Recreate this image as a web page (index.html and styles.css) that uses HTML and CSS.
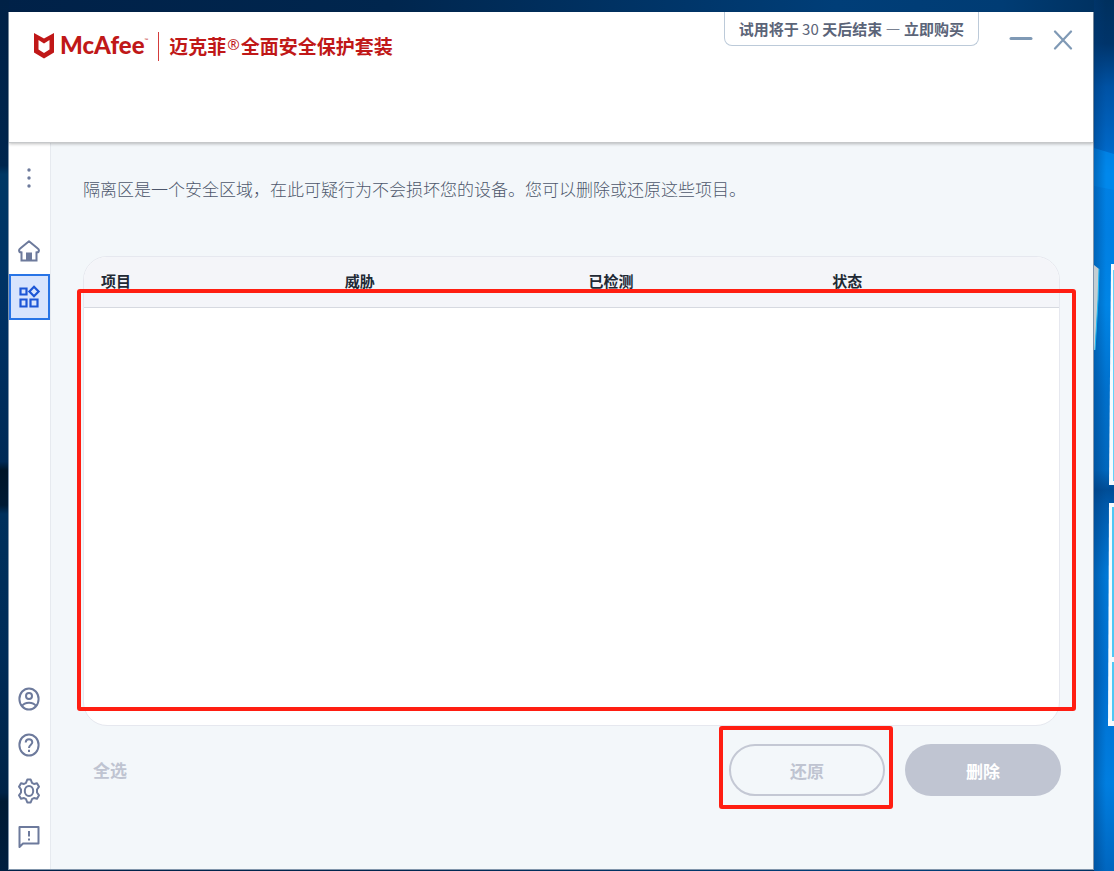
FILE: index.html
```html
<!DOCTYPE html>
<html lang="zh-CN">
<head>
<meta charset="utf-8">
<meta name="viewport" content="width=device-width, initial-scale=1">
<title>迈克菲® 全面安全保护套装</title>
<link rel="stylesheet" href="styles.css">
</head>
<body>
<div class="wallpaper" aria-hidden="true">
  <div class="wall-left"></div>
  <div class="wall-right">
    <svg width="20" height="871" viewBox="0 0 20 871" preserveAspectRatio="none">
      <defs>
        <linearGradient id="sky" x1="0" y1="0" x2="0" y2="1">
          <stop offset="0" stop-color="#00305e"/><stop offset=".05" stop-color="#00346a"/>
          <stop offset=".1" stop-color="#0052a4"/><stop offset=".17" stop-color="#0067c6"/>
          <stop offset=".2" stop-color="#0080e4"/><stop offset=".27" stop-color="#007fe2"/>
          <stop offset=".35" stop-color="#0085e6"/><stop offset=".45" stop-color="#0070cc"/>
          <stop offset=".54" stop-color="#0067bd"/><stop offset=".562" stop-color="#004d96"/>
          <stop offset=".58" stop-color="#0059aa"/><stop offset=".66" stop-color="#0078d6"/>
          <stop offset=".78" stop-color="#0070d0"/><stop offset=".9" stop-color="#007ee0"/>
          <stop offset="1" stop-color="#0066bf"/>
        </linearGradient>
        <linearGradient id="shade" x1="0" y1="0" x2="1" y2="0">
          <stop offset="0" stop-color="#003a78" stop-opacity=".4"/><stop offset="1" stop-color="#003a78" stop-opacity="0"/>
        </linearGradient>
      </defs>
      <rect width="20" height="871" fill="url(#sky)"/>
      <path d="M0 148L20 154V190L0 186Z" fill="#008cf0" opacity=".7"/>
      <rect width="12" height="871" fill="url(#shade)"/>
      <path d="M0 265L5 269L4 300L1 350L0 350Z" fill="#c3ced3"/>
      <path d="M5 269L4 300L1 350" fill="none" stroke="#20b8f0"/>
      <path d="M17 264H20V485H15Z" fill="#f4fbff"/>
      <path d="M19 270H20V481H19Z" fill="#62d2fa"/>
      <path d="M15 503H20V726H14Z" fill="#f4fbff"/>
      <path d="M18 507H20V657H18ZM18 662H20V721H18Z" fill="#4fc8f4"/>
    </svg>
  </div>
</div>

<div class="window">
  <header class="titlebar">
    <div class="brand">
      <svg class="shield" width="20" height="26" viewBox="0 0 20 26" aria-hidden="true">
        <path d="M0 0L10 5.500L20 0V19.500L10 25.500L0 19.500ZM4.500 7V16.500L10 20L15.500 16.500V7L10 10.500Z" fill="#c01818" fill-rule="evenodd"/>
      </svg>
      <span class="wordmark">McAfee<sup class="tm">™</sup></span>
      <h1 class="product">迈克菲<span class="reg">®</span>全面安全保护套装</h1>
    </div>
    <div class="window-tools">
      <a class="trial" href="#">试用将于 <span class="thin">30</span> 天后结束 <span class="dash">—</span> 立即购买</a>
      <button class="tool minimize" type="button" aria-label="最小化">
        <svg width="24" height="24" viewBox="0 0 24 24"><path d="M2 11.500H22" stroke="#7f99b5" stroke-width="3" stroke-linecap="round"/></svg>
      </button>
      <button class="tool close" type="button" aria-label="关闭">
        <svg width="20" height="20" viewBox="0 0 20 20"><path d="M2 1.500L18 18.500M18 1.500L2 18.500" stroke="#7f99b5" stroke-width="2.200" stroke-linecap="round"/></svg>
      </button>
    </div>
  </header>

  <div class="body">
    <nav class="sidebar" aria-label="导航">
      <button class="nav-item menu" type="button" aria-label="菜单">
        <svg width="24" height="24" viewBox="0 0 24 24" fill="#6d7a9c"><circle cx="12" cy="4" r="1.700"/><circle cx="12" cy="12" r="1.700"/><circle cx="12" cy="20" r="1.700"/></svg>
      </button>
      <button class="nav-item" type="button" aria-label="主页">
        <svg width="24" height="24" viewBox="0 0 24 24" fill="none" stroke="#6d7a9c" stroke-width="2"><path d="M4.500 12.500V21.500H19.500V12.500"/><path d="M4.500 13.200H2.700Q1.300 11 3.200 9.500L12 2.200L20.800 9.500Q22.700 11 21.300 13.200H19.500" stroke-linejoin="round"/><path d="M10 22V14.500H14V22M12 14.500V22"/></svg>
      </button>
      <button class="nav-item active" type="button" aria-label="我的保护" aria-current="page">
        <svg width="24" height="24" viewBox="0 0 24 24" fill="none" stroke="#1d56d6" stroke-width="2.200"><path d="M3.500 3.500H9.500V9.500H3.500ZM3.500 14.500H9.500V21.500H3.500ZM13.500 14.500H20.500V21.500H13.500ZM17 1.800L21.600 6.500L17 11.200L12.400 6.500Z"/></svg>
      </button>
      <button class="nav-item lower" type="button" aria-label="帐户">
        <svg width="24" height="24" viewBox="0 0 24 24" fill="none" stroke="#6d7a9c" stroke-width="2"><ellipse cx="12" cy="12" rx="9.600" ry="10.600"/><circle cx="12" cy="9" r="3"/><path d="M5 19Q7 15.700 12 15.700T19 19"/></svg>
      </button>
      <button class="nav-item" type="button" aria-label="帮助">
        <svg width="24" height="24" viewBox="0 0 24 24" fill="none" stroke="#6d7a9c" stroke-width="2"><ellipse cx="12" cy="12" rx="9.600" ry="10.600"/><path d="M8.700 9.500Q8.900 6.300 12 6.300T15.300 9.300C15.300 11.600 12 11.800 12 15M12 16.800V19"/></svg>
      </button>
      <button class="nav-item" type="button" aria-label="设置">
        <svg width="24" height="26" viewBox="0 0 24 26" fill="none" stroke="#6d7a9c" stroke-width="2" stroke-linejoin="round"><path d="M10.300 1.500H13.700L15 4.800L17 6L20 5.300L22 8.700L20 11.500V14.500L22 17.300L20 20.700L17 20L15 21.200L13.700 24.500H10.300L9 21.200L7 20L4 20.700L2 17.300L4 14.500V11.500L2 8.700L4 5.300L7 6L9 4.800Z"/><ellipse cx="12" cy="13" rx="4.200" ry="5"/></svg>
      </button>
      <button class="nav-item" type="button" aria-label="反馈">
        <svg width="24" height="24" viewBox="0 0 24 24" fill="none" stroke="#6d7a9c" stroke-width="2"><path d="M2.500 22V2H21.500V18.500H6Z" stroke-linejoin="round"/><path d="M12 6V11.500M12 13.500V15.500"/></svg>
      </button>
    </nav>

    <main class="content">
      <p class="intro">隔离区是一个安全区域，在此可疑行为不会损坏您的设备。您可以删除或还原这些项目。</p>
      <section class="list-area">
        <div class="card">
          <table class="items">
            <thead><tr><th scope="col">项目</th><th scope="col">威胁</th><th scope="col">已检测</th><th scope="col">状态</th></tr></thead>
            <tbody></tbody>
          </table>
        </div>
        <div class="mark mark-list"></div>
      </section>
      <div class="actions">
        <button class="select-all" type="button" disabled>全选</button>
        <div class="restore-area">
          <button class="pill outline" type="button" disabled>还原</button>
          <div class="mark mark-restore"></div>
        </div>
        <button class="pill filled" type="button" disabled>删除</button>
      </div>
    </main>
  </div>
</div>
</body>
</html>
```

FILE: styles.css
```css
* { box-sizing: border-box; }

body {
  margin: 0;
  min-height: 100vh;
  display: flex;
  padding: 12px 20px 1px 8px;
  position: relative;
  background: linear-gradient(90deg, #002148 0%, #00264e 35%, #003e78 75%, #003c74 90%, #00305e 100%);
  font-family: "Noto Sans CJK SC", sans-serif;
  color: #5b6478;
}

button { font: inherit; margin: 0; padding: 0; border: 0; background: none; color: inherit; }
svg { display: block; }

.wall-left, .wall-right { position: absolute; top: 0; bottom: 0; }
.wall-left {
  left: 0;
  width: 9px;
  background: linear-gradient(#002146 0%, #00264e 19%, #003764 20%, #003264 35%, #002a56 53%, #001528 54%, #001a34 58%, #00305c 59%, #002c58 75%, #002347 91%, #001a33 92%, #001f40 100%);
}
.wall-right { right: 0; width: 20px; }
.wall-right svg { height: 100%; }

.window {
  position: relative;
  flex: 1;
  display: flex;
  flex-direction: column;
  background: #f3f7fa;
  border: solid #8195ab;
  border-width: 0 1px 1px;
}

.titlebar {
  position: relative;
  display: flex;
  justify-content: space-between;
  align-items: flex-start;
  height: 131px;
  padding: 0 18px 0 25px;
  background: #fff;
  border-bottom: 1px solid #c6c8ca;
  box-shadow: 0 1px 3px rgba(0, 0, 0, .25);
}

.brand { display: flex; align-items: center; padding-top: 19px; color: #c01818; }
.wordmark {
  display: flex;
  margin-left: 6px;
  padding-bottom: 2px;
  font: 900 24px/28px Lato, sans-serif;
}
.tm { font: 400 5px/18px Lato, sans-serif; }
.product {
  display: flex;
  align-items: center;
  margin: 0 0 0 10px;
  padding-left: 10px;
  height: 29px;
  border-left: 1px solid #d43c3c;
  font-size: 19px;
  line-height: 28px;
  font-weight: 700;
}
.reg { font: 400 15px/28px "Open Sans", sans-serif; padding: 0 1px 4px; }

.window-tools { display: flex; align-items: flex-start; }
.trial {
  height: 34px;
  padding: 0 14px;
  border: 1px solid #bccad9;
  border-top: 0;
  border-radius: 0 0 8px 8px;
  font-size: 15px;
  line-height: 34px;
  font-weight: 700;
  color: #5b6478;
  text-decoration: none;
  white-space: nowrap;
}
.thin { font-weight: 400; }
.dash { font-weight: 500; }
.minimize { margin: 15px 0 0 30px; }
.close { margin: 18px 2px 0 20px; }

.body { flex: 1; display: flex; }

.sidebar {
  width: 42px;
  display: flex;
  flex-direction: column;
  padding: 12px 0 9px;
  background: #fff;
  border-right: 1px solid #e6eaef;
}
.nav-item { height: 46px; display: grid; place-items: center; padding-right: 1px; }
.menu { margin-bottom: 27px; }
.lower { margin-top: auto; }
.active { background: #d8e4fd; border: 2px solid #2874e6; }

.content {
  flex: 1;
  display: flex;
  flex-direction: column;
  padding: 34px 33px 73px 32px;
}
.intro { margin: 0 0 55px; font-size: 17px; line-height: 24px; font-weight: 300; color: #4e576c; }

.list-area { flex: 1; display: flex; position: relative; }
.card {
  flex: 1;
  overflow: hidden;
  background: #fff;
  border: 1px solid #e6e8ef;
  border-radius: 24px;
}
.items { width: 100%; table-layout: fixed; border-collapse: collapse; background: #f4f5f9; }
.items th {
  height: 50px;
  padding: 0 0 1px 17px;
  border-bottom: 1px solid #d6d9e0;
  text-align: left;
  font-size: 15px;
  line-height: 22px;
  font-weight: 700;
  color: #212934;
}

.mark { position: absolute; border: 4px solid #ff1e12; border-radius: 3px; pointer-events: none; }
.mark-list { inset: 33px -16px 15px -6px; }
.mark-restore { inset: -18px -8px -13px -10px; }

.actions { display: flex; align-items: center; gap: 20px; margin: 18px -1px 0 0; }
.select-all { margin: 0 auto 0 10px; }
.select-all, .pill { font-size: 17px; line-height: 24px; font-weight: 700; color: #bfc4d1; }
.restore-area { position: relative; }
.pill { display: block; width: 156px; height: 52px; border-radius: 26px; padding-top: 2px; }
.outline { border: 2px solid #c4c8d4; }
.filled { background: #c0c5d2; color: #fff; }
```
